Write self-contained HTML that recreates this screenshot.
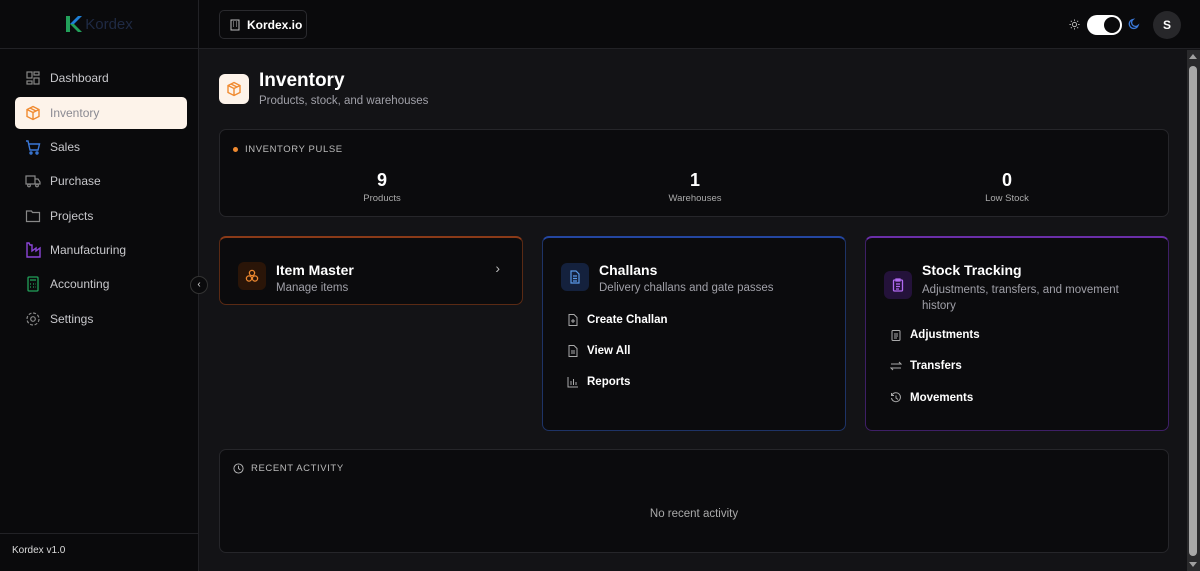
<!DOCTYPE html>
<html><head><style>
*{box-sizing:border-box;margin:0;padding:0}
body{width:1200px;height:571px;overflow:hidden;background:#131316;font-family:"Liberation Sans",sans-serif;color:#fff;position:relative}
.side{position:absolute;left:0;top:0;width:199px;height:571px;background:#0a0a0c;border-right:1px solid #222226}
.logo{height:49px;border-bottom:1px solid #222226;display:flex;align-items:center;justify-content:center;gap:2px;font-size:15px;color:#1f2a44}
.nav{position:absolute;left:15px;width:172px;height:32px;display:flex;align-items:center;padding-left:10px;gap:9px;font-size:12px;color:#c8c8cc}
.nav.act{background:#fdf3ea;color:#8a8a92;border-radius:5px}
.nav svg{width:16px;height:16px}
.top{position:absolute;left:199px;top:0;right:0;height:49px;background:#0a0a0c;border-bottom:1px solid #222226}
.card{position:absolute;background:#0b0b0d;border:1px solid #26262a;border-radius:7px}
.t{font-weight:bold}
.sub{color:#a0a0a8;font-size:11.5px}
.link{position:absolute;left:24px;display:flex;align-items:center;gap:8px;font-size:11.5px;font-weight:bold}
.link svg{width:12px;height:12px}
</style></head><body>
<div class="side">
<div class="logo"><svg width="18" height="18" viewBox="0 0 18 18"><path d="M1 1h4v16H1z" fill="#22a05a"/><path d="M5 9L13 1h4L9 9z" fill="#1e7fd6"/><path d="M5 9h4l8 8h-4z" fill="#22a05a"/></svg><span>Kordex</span></div>
<div class="nav" style="top:62px"><svg viewBox="0 0 16 16" fill="none" stroke="#888" stroke-width="1.2"><rect x="2" y="2" width="5" height="6"/><rect x="9" y="2" width="5" height="3"/><rect x="9" y="8" width="5" height="6"/><rect x="2" y="11" width="5" height="3"/></svg>Dashboard</div>
<div class="nav act" style="top:97px"><svg viewBox="0 0 16 16" fill="none" stroke="#f08a30" stroke-width="1.4"><path d="M8 1.5l6 3v7l-6 3-6-3v-7z M2 4.5l6 3 6-3 M8 7.5v7 M5 3l6 3"/></svg>Inventory</div>
<div class="nav" style="top:131px"><svg viewBox="0 0 16 16" fill="none" stroke="#3a78d8" stroke-width="1.4"><path d="M1 2h2l2 9h8l1.5-6H4"/><circle cx="6" cy="14" r="1"/><circle cx="12" cy="14" r="1"/></svg>Sales</div>
<div class="nav" style="top:165px"><svg viewBox="0 0 16 16" fill="none" stroke="#888" stroke-width="1.2"><path d="M1 3h9v8H1z M10 6h3l2 3v2h-5"/><circle cx="4" cy="12.5" r="1.3"/><circle cx="12" cy="12.5" r="1.3"/></svg>Purchase</div>
<div class="nav" style="top:200px"><svg viewBox="0 0 16 16" fill="none" stroke="#888" stroke-width="1.2"><path d="M1.5 3h5l1 1.5h7v9h-13z"/></svg>Projects</div>
<div class="nav" style="top:234px"><svg viewBox="0 0 16 16" fill="none" stroke="#8b45d8" stroke-width="1.4"><path d="M2 1v14h13V6l-4 3V6L7 9V3H5L4 1z"/></svg>Manufacturing</div>
<div class="nav" style="top:268px"><svg viewBox="0 0 16 16" fill="none" stroke="#22a05a" stroke-width="1.3"><rect x="3" y="1" width="10" height="14" rx="1"/><path d="M5 4h6 M5 8h1 M8 8h1 M10.5 8h.5 M5 11h1 M8 11h1 M10.5 11h.5"/></svg>Accounting</div>
<div class="nav" style="top:303px"><svg viewBox="0 0 16 16" fill="none" stroke="#888" stroke-width="1.2"><circle cx="8" cy="8" r="2.3"/><circle cx="8" cy="8" r="6" stroke-dasharray="3 1.7"/></svg>Settings</div>
<div style="position:absolute;left:12px;top:545px;font-size:10px;color:#ddd">Kordex v1.0</div>
</div>
<div style="position:absolute;left:0;top:533px;width:199px;border-top:1px solid #222226"></div>
<div style="position:absolute;left:190px;top:276px;width:18px;height:18px;border-radius:50%;background:#0a0a0c;border:1px solid #333;color:#ddd;font-size:10px;text-align:center;line-height:16px">‹</div>
<div class="top">
<div style="position:absolute;left:20px;top:10px;width:88px;height:29px;border:1px solid #2a2a2e;border-radius:5px;display:flex;align-items:center;gap:6px;padding-left:9px;font-size:12px;font-weight:bold;white-space:nowrap"><svg width="12" height="12" viewBox="0 0 12 12" fill="none" stroke="#bbb"><rect x="2" y="1" width="8" height="10"/><path d="M4 3h1M7 3h1M4 5h1M7 5h1M4 7h1M7 7h1"/></svg>Kordex.io</div>
<svg style="position:absolute;left:870px;top:19px" width="11" height="11" viewBox="0 0 12 12" fill="none" stroke="#bbb" stroke-width="1"><circle cx="6" cy="6" r="2.3"/><path d="M6 .5v1.5M6 10v1.5M.5 6H2M10 6h1.5M2 2l1 1M9 9l1 1M2 10l1-1M9 3l1-1"/></svg>
<div style="position:absolute;left:888px;top:15px;width:35px;height:20px;border-radius:10px;background:#fff"><div style="position:absolute;right:2px;top:2px;width:16px;height:16px;border-radius:50%;background:#0a0a0c"></div></div>
<svg style="position:absolute;left:929px;top:18px" width="12" height="12" viewBox="0 0 12 12" fill="none" stroke="#3a78d8" stroke-width="1.3"><path d="M10 7.5A4.5 4.5 0 1 1 5 1.5a3.5 3.5 0 0 0 5 6z"/></svg>
<div style="position:absolute;left:954px;top:11px;width:28px;height:28px;border-radius:50%;background:#27272a;text-align:center;line-height:28px;font-size:12px;font-weight:bold">S</div>
</div>
<div style="position:absolute;left:1187px;top:50px;width:13px;height:521px;background:#2a2a2c">
<div style="position:absolute;left:2px;top:4px;width:0;height:0;border-left:4px solid transparent;border-right:4px solid transparent;border-bottom:5px solid #a0a0a0"></div>
<div style="position:absolute;left:2px;top:16px;width:8px;height:490px;border-radius:4px;background:#a8a8a8"></div>
<div style="position:absolute;left:2px;bottom:4px;width:0;height:0;border-left:4px solid transparent;border-right:4px solid transparent;border-top:5px solid #a0a0a0"></div></div>
<div style="position:absolute;left:219px;top:74px;width:30px;height:30px;background:#fdf3ea;border-radius:6px"><svg style="margin:7px" width="16" height="16" viewBox="0 0 16 16" fill="none" stroke="#f08a30" stroke-width="1.4"><path d="M8 1.5l6 3v7l-6 3-6-3v-7z M2 4.5l6 3 6-3 M8 7.5v7 M5 3l6 3"/></svg></div>
<div style="position:absolute;left:259px;top:70px;font-size:19px;font-weight:bold">Inventory</div>
<div class="sub" style="position:absolute;left:259px;top:95px;font-size:11.5px">Products, stock, and warehouses</div>
<div class="card" style="left:219px;top:129px;width:950px;height:88px">
<div style="position:absolute;left:13px;top:14px;font-size:9.5px;letter-spacing:.6px;color:#bbb;display:flex;align-items:center;gap:7px"><span style="width:5px;height:5px;border-radius:50%;background:#f08a30"></span>INVENTORY PULSE</div>
<div style="position:absolute;left:112px;width:100px;text-align:center;top:40px"><div class="t" style="font-size:18px">9</div><div style="font-size:9.5px;color:#aaa;margin-top:2px">Products</div></div>
<div style="position:absolute;left:425px;width:100px;text-align:center;top:40px"><div class="t" style="font-size:18px">1</div><div style="font-size:9.5px;color:#aaa;margin-top:2px">Warehouses</div></div>
<div style="position:absolute;left:737px;width:100px;text-align:center;top:40px"><div class="t" style="font-size:18px">0</div><div style="font-size:9.5px;color:#aaa;margin-top:2px">Low Stock</div></div>
</div>
<div class="card" style="left:219px;top:236px;width:304px;height:69px;border-color:#5a2a14;border-top:2px solid #8a3a18">
<div style="position:absolute;left:18px;top:24px;width:28px;height:28px;border-radius:6px;background:#2a1508"></div>
<svg style="position:absolute;left:25px;top:31px" width="14" height="14" viewBox="0 0 14 14" fill="none" stroke="#f08a30" stroke-width="1.3"><circle cx="7" cy="4" r="2.6"/><circle cx="4" cy="9.5" r="2.6"/><circle cx="10" cy="9.5" r="2.6"/></svg>
<div class="t" style="position:absolute;left:56px;top:24px;font-size:14px">Item Master</div>
<div class="sub" style="position:absolute;left:56px;top:44px">Manage items</div>
<div style="position:absolute;right:22px;top:22px;color:#bbb;font-size:14px">›</div>
</div>
<div class="card" style="left:542px;top:236px;width:304px;height:195px;border-color:#1e3366;border-top:2px solid #2446a0">
<div style="position:absolute;left:18px;top:25px;width:28px;height:28px;border-radius:6px;background:#14213d"><svg style="margin:7px" width="14" height="14" viewBox="0 0 14 14" fill="none" stroke="#5a9ae8" stroke-width="1.2"><path d="M3 1h5l3 3v9H3z M5 6h4 M5 8.5h4 M5 11h4"/></svg></div>
<div class="t" style="position:absolute;left:56px;top:24px;font-size:14px">Challans</div>
<div class="sub" style="position:absolute;left:56px;top:44px">Delivery challans and gate passes</div>
<div class="link" style="top:76px"><svg viewBox="0 0 12 12" fill="none" stroke="#aaa"><path d="M2 .5h5l3 3v8H2z M6 5v4M4 7h4"/></svg>Create Challan</div>
<div class="link" style="top:107px"><svg viewBox="0 0 12 12" fill="none" stroke="#aaa"><path d="M2 .5h5l3 3v8H2z M4 6h4M4 8h4"/></svg>View All</div>
<div class="link" style="top:138px"><svg viewBox="0 0 12 12" fill="none" stroke="#aaa"><path d="M1 1v10h10 M4 9V5 M6.5 9V3 M9 9V6"/></svg>Reports</div>
</div>
<div class="card" style="left:865px;top:236px;width:304px;height:195px;border-color:#3e1f66;border-top:2px solid #6a2ea8">
<div style="position:absolute;left:18px;top:33px;width:28px;height:28px;border-radius:6px;background:#24123a"><svg style="margin:7px" width="14" height="14" viewBox="0 0 14 14" fill="none" stroke="#b06af0" stroke-width="1.3"><rect x="2.5" y="2" width="9" height="11" rx="1"/><path d="M5 1h4v2H5z M5 6h4 M5 8.5h4 M5 11h3"/></svg></div>
<div class="t" style="position:absolute;left:56px;top:24px;font-size:14px">Stock Tracking</div>
<div class="sub" style="position:absolute;left:56px;top:44px;width:220px;line-height:16px">Adjustments, transfers, and movement history</div>
<div class="link" style="top:91px"><svg viewBox="0 0 12 12" fill="none" stroke="#aaa"><rect x="2" y="1.5" width="8" height="10" rx="1"/><path d="M4 5h4M4 7h4M4 9h3"/></svg>Adjustments</div>
<div class="link" style="top:122px"><svg viewBox="0 0 12 12" fill="none" stroke="#aaa"><path d="M1 4h10l-2-2 M11 8H1l2 2"/></svg>Transfers</div>
<div class="link" style="top:154px"><svg viewBox="0 0 12 12" fill="none" stroke="#aaa"><path d="M2 3a4.5 4.5 0 1 1-.5 3 M6 3.5V6l2 1.5 M1.5 1v2.5H4"/></svg>Movements</div>
</div>
<div class="card" style="left:219px;top:449px;width:950px;height:104px">
<div style="position:absolute;left:13px;top:13px;font-size:9.5px;letter-spacing:.6px;color:#bbb;display:flex;align-items:center;gap:7px"><svg width="11" height="11" viewBox="0 0 12 12" fill="none" stroke="#bbb"><circle cx="6" cy="6" r="5"/><path d="M6 3v3l2 1.5"/></svg>RECENT ACTIVITY</div>
<div style="position:absolute;left:0;right:0;top:58px;text-align:center;font-size:11.5px;color:#aaa">No recent activity</div>
</div>
</body></html>
